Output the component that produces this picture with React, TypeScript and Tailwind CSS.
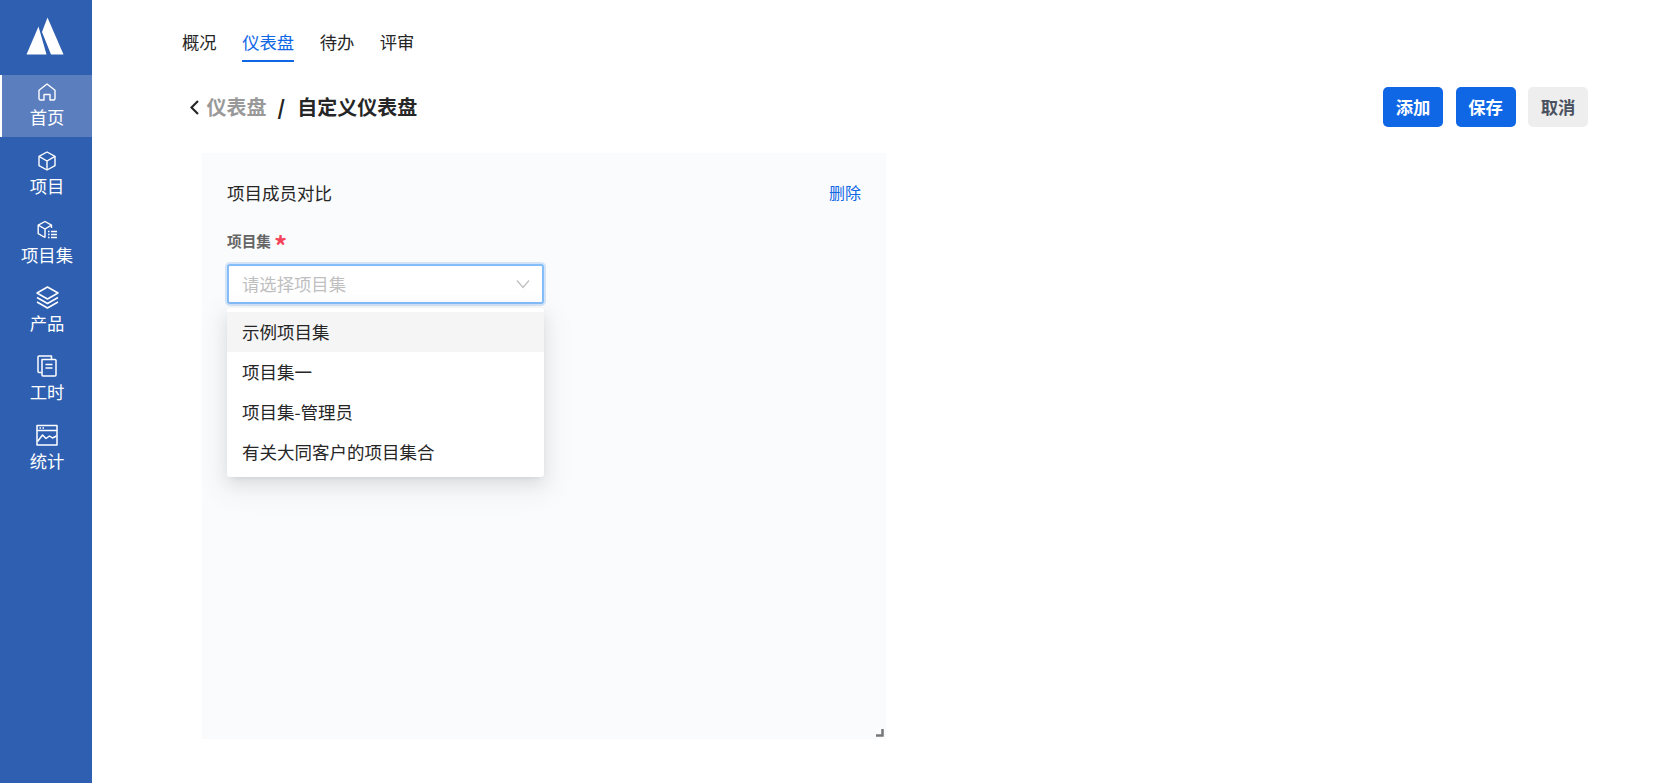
import React from "react";

function Home() {
  return (
    <svg className="mb-[1px]" width="18" height="18" viewBox="0 0 18 18" fill="none" stroke="currentColor" strokeWidth="1.4" strokeLinejoin="round">
      <path d="M1 7.2 9 1l8 6.2V15.5a1.5 1.5 0 0 1-1.5 1.5H12v-5.5H6V17H2.5A1.5 1.5 0 0 1 1 15.5z" />
    </svg>
  );
}
function Cube() {
  return (
    <svg width="18" height="20" viewBox="0 0 18 20" fill="none" stroke="currentColor" strokeWidth="1.4" strokeLinejoin="round">
      <path d="M9 1 17 5.3v9.4L9 19l-8-4.3V5.3z" />
      <path d="M1 5.3 9 10l8-4.7M9 10v9" />
    </svg>
  );
}
function CubeList() {
  return (
    <svg width="20" height="20" viewBox="0 0 20 20" fill="none" stroke="currentColor" strokeWidth="1.4" strokeLinejoin="round">
      <path d="M14.5 8V5.2L8 1.5 1.2 5.2v8.4L8 17.5" />
      <path d="M1.2 5.2 8 9l6.5-3.8M8 9v8.5" />
      <path d="M11 11.5h1.5M14 11.5h6M11 14.5h1.5M14 14.5h6M11 17.5h1.5M14 17.5h6" strokeWidth="1.7" />
    </svg>
  );
}
function Layers() {
  return (
    <svg className="-mb-[1px]" width="23" height="23" viewBox="0 0 23 23" fill="none" stroke="currentColor" strokeWidth="1.5" strokeLinejoin="round">
      <path d="M11.5 1 22 7l-10.5 6L1 7z" />
      <path d="M1 11.5l10.5 6 10.5-6" />
      <path d="M1 16l10.5 6L22 16" />
    </svg>
  );
}
function Pages() {
  return (
    <svg width="20" height="22" viewBox="0 0 20 22" fill="none" stroke="currentColor" strokeWidth="1.5" strokeLinejoin="round">
      <path d="M4.5 17.5H2.2A1 1 0 0 1 1 16.5V2a1 1 0 0 1 1-1h12.5v3" />
      <path d="M5 4.5h13a1 1 0 0 1 1 1V20a1 1 0 0 1-1 1H6a1 1 0 0 1-1-1z" />
      <path d="M8.5 9.5h7M8.5 13h7" />
    </svg>
  );
}
function Stats() {
  return (
    <svg width="22" height="22" viewBox="0 0 22 22" fill="none" stroke="currentColor" strokeWidth="1.5" strokeLinejoin="round">
      <path d="M1 1.5h20v19.5H1zM1 6.5h20" />
      <path d="M3.5 4h1.5M6.5 4h1.5" />
      <path d="M1.5 17.5 6.5 11l3.5 3.5 3.5-2.5 3 2 4-2" />
    </svg>
  );
}

const nav = [
  { label: "首页", icon: <Home />, active: true },
  { label: "项目", icon: <Cube /> },
  { label: "项目集", icon: <CubeList /> },
  { label: "产品", icon: <Layers /> },
  { label: "工时", icon: <Pages /> },
  { label: "统计", icon: <Stats /> },
];

export default function App() {
  return (
    <div className="flex h-[783px] w-full overflow-hidden bg-white font-['Noto_Sans_CJK_SC','Noto_Sans',sans-serif] text-[17.5px] text-[#262626]">
      <aside className="flex w-[92px] shrink-0 flex-col bg-[#2f5fb1] text-white">
        <div className="flex h-[75px] items-start justify-center pt-[17px] pr-[2px]">
          <svg width="38" height="38" viewBox="0 0 38 38" fill="white">
            <path d="M12.5 9.5 0.5 37.5h20z" />
            <path d="M21.5 0.5 16 15l9 22.5H37.5z" />
          </svg>
        </div>
        <nav className="flex flex-col gap-[6.8px]">
          {nav.map((n) => (
            <div
              key={n.label}
              className={
                n.active
                  ? "flex h-[62px] flex-col items-center border-l-2 border-white bg-[#5b7ebf]"
                  : "flex h-[62px] flex-col items-center border-l-2 border-transparent"
              }
            >
              <div className="flex h-[27px] items-end justify-center">{n.icon}</div>
              <div className="mt-[2px] text-[17.33px] leading-[26px]">{n.label}</div>
            </div>
          ))}
        </nav>
      </aside>

      <main className="flex-1 pl-[90px] pr-[85px]">
        <div className="flex h-[62px] items-start gap-[25.5px] pt-[29px] text-[17.33px] leading-[26px]">
          <span>概况</span>
          <span className="h-[33px] border-b-2 border-[#0f67e6] text-[#0f67e6]">仪表盘</span>
          <span>待办</span>
          <span>评审</span>
        </div>

        <div className="mt-[25px] flex h-[40px] items-center justify-between">
          <div className="flex items-center pl-[8px] text-[20px] font-semibold">
            <svg width="9" height="15" viewBox="0 0 9 15" fill="none" stroke="#262626" strokeWidth="2.2">
              <path d="M8 1 1.5 7.5 8 14" />
            </svg>
            <span className="ml-[7.5px] text-[#999999]">仪表盘</span>
            <span className="ml-[11px] font-black">/</span>
            <span className="ml-[12px]">自定义仪表盘</span>
          </div>
          <div className="flex gap-[12.5px] text-[17.33px] font-semibold">
            <button className="h-[40px] w-[60px] rounded-[5px] bg-[#0f67e6] text-white">添加</button>
            <button className="h-[40px] w-[60px] rounded-[5px] bg-[#0f67e6] text-white">保存</button>
            <button className="h-[40px] w-[60px] rounded-[5px] bg-[#eeeeee] text-[#4a5160]">取消</button>
          </div>
        </div>

        <section className="relative ml-[20px] mt-[26px] h-[586px] w-[684px] bg-[#fafbfc] pl-[25px] pr-[25px] pt-[25px]">
          <div className="flex h-[30px] items-center justify-between leading-[30px]">
            <span>项目成员对比</span>
            <span className="mb-[2px] text-[16px] text-[#0f67e6]">删除</span>
          </div>
          <div className="mt-[21px] flex h-[24px] items-center text-[14.67px] font-semibold leading-[24px] text-[#666666]">
            项目集<span className="ml-[3px] mt-[7px] text-[26px] font-bold leading-[24px] text-[#f5455c]">*</span>
          </div>
          <div className="relative mt-[11px] w-[317px]">
            <div className="flex h-[40px] items-center justify-between rounded-[3px] border-2 border-[#85bdf9] bg-white pl-[13px] pr-[12px] shadow-[0_0_0_2px_rgba(15,103,230,0.16)]">
              <span className="text-[17.33px] text-[#bfbfbf]">请选择项目集</span>
              <svg width="14" height="10" viewBox="0 0 14 10" fill="none" stroke="#bfbfbf" strokeWidth="1.2">
                <path d="M1 1.5 7 8.5 13 1.5" />
              </svg>
            </div>
            <ul className="absolute left-0 top-[44px] w-[317px] rounded-[3px] bg-white pb-[5px] pt-[4px] shadow-[0_3px_6px_-4px_rgba(0,0,0,0.12),0_6px_16px_0_rgba(0,0,0,0.08),0_9px_28px_8px_rgba(0,0,0,0.05)]">
              <li className="flex h-[40px] items-center bg-[#f5f5f5] pl-[15px]">示例项目集</li>
              <li className="flex h-[40px] items-center pl-[15px]">项目集一</li>
              <li className="flex h-[40px] items-center pl-[15px]">项目集-管理员</li>
              <li className="flex h-[40px] items-center pl-[15px]">有关大同客户的项目集合</li>
            </ul>
          </div>
          <svg className="absolute bottom-[2px] right-[2px]" width="8" height="8" viewBox="0 0 8 8" fill="none" stroke="#777777" strokeWidth="2.5">
            <path d="M6.5 0v6.5H0" />
          </svg>
        </section>
      </main>
    </div>
  );
}
